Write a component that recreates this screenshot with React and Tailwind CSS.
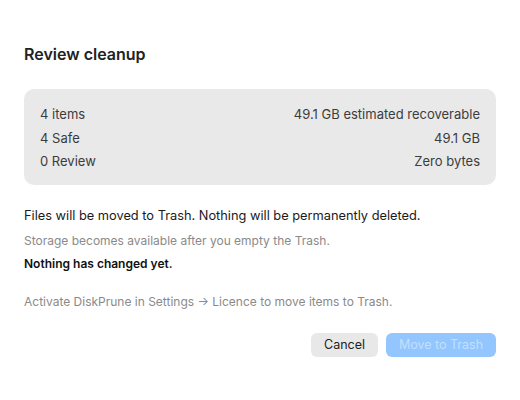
export default function App() {
  return (
    <div className="w-[520px] h-[400px] bg-white px-6 pt-[44px] text-[13px] leading-4" style={{ fontFamily: 'Inter, "Liberation Sans", sans-serif' }}>
      <h1 className="text-[16px] leading-5 font-semibold text-[#222]">Review cleanup</h1>
      <div className="mt-[25px] rounded-[10px] bg-[#e9e9e9] px-4 pt-[17px] pb-4 flex flex-col gap-[7.5px] text-[#3c3c3c]">
        <div className="flex justify-between"><span>4 items</span><span>49.1 GB estimated recoverable</span></div>
        <div className="flex justify-between"><span>4 Safe</span><span>49.1 GB</span></div>
        <div className="flex justify-between"><span>0 Review</span><span>Zero bytes</span></div>
      </div>
      <p className="mt-[23px] text-[12.8px] text-[#1a1a1a]">Files will be moved to Trash. Nothing will be permanently deleted.</p>
      <p className="mt-[9px] text-[12px] text-[#8a8a8a]">Storage becomes available after you empty the Trash.</p>
      <p className="mt-[7px] text-[12px] font-semibold text-[#111]">Nothing has changed yet.</p>
      <p className="mt-[22px] text-[12px] text-[#8a8a8a]">Activate DiskPrune in Settings → Licence to move items to Trash.</p>
      <div className="mt-[23px] flex justify-end gap-2">
        <button className="h-6 w-[67px] rounded-md bg-[#e8e8e8] text-[#222] text-[12.5px]">Cancel</button>
        <button className="h-6 w-[110px] rounded-md bg-[#93c6ff] text-[#c3dffd] text-[12.5px]">Move to Trash</button>
      </div>
    </div>
  );
}
